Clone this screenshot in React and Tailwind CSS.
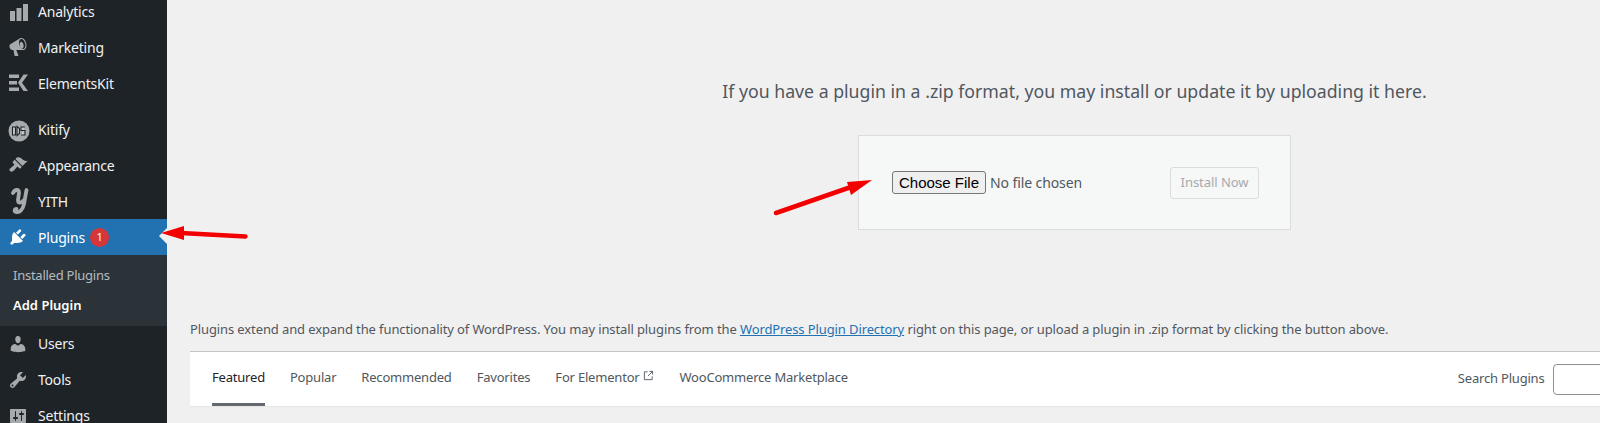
import React from 'react';

const ICONS = {
  marketing: 'M18.15 5.94c.46 1.62.38 3.22-.02 4.48-.42 1.28-1.26 2.18-2.3 2.48-.16.06-.26.06-.4.06-.06.02-.12.02-.18.02-.06.02-.14.02-.22.02h-6.8l2.22 5.5c.02.14-.06.26-.14.34-.08.1-.24.16-.34.16H6.95c-.1 0-.26-.06-.34-.16-.08-.08-.16-.2-.14-.34l-1-5.5H4.25l-.02-.02c-.5.06-1.08-.18-1.54-.62s-.88-1.08-1.06-1.88c-.24-.8-.2-1.56-.02-2.2.18-.62.58-1.08 1.06-1.3l.02-.02 9-5.4c.1-.06.18-.1.24-.16.06-.04.14-.08.24-.12.16-.08.28-.12.5-.18 1.04-.3 2.24.1 3.22 1 .98.88 1.8 2.24 2.26 3.86zm-2.58 5.98h-.02c.4-.1.74-.34 1.04-.7.58-.7.86-1.76.86-3.04 0-.64-.1-1.3-.28-1.98-.34-1.36-1.02-2.5-1.78-3.24s-1.68-1.1-2.46-.88c-.82.22-1.4.96-1.7 2-.32 1.04-.28 2.36.06 3.72.38 1.36 1 2.5 1.8 3.24.78.74 1.62 1.1 2.48.88zm-2.54-7.08c.22-.04.42-.02.62.04.38.16.76.48 1.1 1s.58 1.14.74 1.84c.32 1.44.1 2.7-.54 3.34-.16.14-.36.26-.58.32-.22.04-.42.02-.62-.04-.38-.16-.76-.48-1.1-1s-.58-1.14-.74-1.84c-.32-1.44-.1-2.7.54-3.34.16-.14.36-.26.58-.32z',
  appearance: 'M14.48 11.06L7.41 3.99l1.5-1.5c.5-.56 2.3-.47 3.51.32 1.21.8 1.43 1.28 2.91 2.1 1.18.64 2.45 1.26 4.45.85zm-.71.71L6.7 4.7 4.93 6.47c-.39.39-.39 1.02 0 1.41l1.06 1.06c.39.39.39 1.03 0 1.42-.6.6-1.43 1.11-2.21 1.69-.35.26-.7.53-1.01.84C1.43 13.23.91 15 2.01 16.1c1.1 1.1 2.87.57 4.21-.75.31-.31.58-.66.84-1.01.58-.78 1.09-1.61 1.69-2.21.39-.39 1.03-.39 1.42 0l1.06 1.06c.39.39 1.02.39 1.41 0z',
  plugins: 'M13.11 4.36L9.87 7.6 8 5.73l3.24-3.24c.35-.34 1.05-.2 1.56.32.52.51.66 1.21.31 1.55zm-8 1.77l.91-1.12 9.01 9.01-1.19.84c-.71.71-2.63 1.16-3.82 1.16H6.14L4.9 17.26c-.59.59-1.54.59-2.12 0-.59-.58-.59-1.53 0-2.12l1.24-1.24v-3.88c0-1.13.4-3.19 1.09-3.89zm7.26 3.97l3.24-3.24c.34-.35 1.04-.21 1.55.31.52.51.66 1.21.31 1.55l-3.24 3.25z',
  users: 'M10 9.25c-2.27 0-2.73-3.44-2.73-3.44C7 4.02 7.82 2 9.97 2c2.16 0 2.98 2.02 2.71 3.81 0 0-.41 3.44-2.68 3.44zm0 2.57L12.72 10c2.39 0 4.52 2.33 4.52 4.53v2.49s-3.65 1.13-7.24 1.13c-3.65 0-7.24-1.13-7.24-1.13v-2.49c0-2.25 1.94-4.48 4.47-4.48z',
  tools: 'M16.68 9.77c-1.34 1.34-3.3 1.67-4.95.99l-5.41 6.52c-.99.99-2.59.99-3.58 0s-.99-2.59 0-3.57l6.52-5.42c-.68-1.65-.35-3.61.99-4.95 1.28-1.28 3.12-1.62 4.72-1.06l-2.89 2.89 2.82 2.82 2.86-2.87c.53 1.58.18 3.39-1.08 4.65zM3.81 16.21c.4.39 1.04.39 1.43 0 .4-.4.4-1.04 0-1.43-.39-.4-1.03-.4-1.43 0-.39.39-.39 1.03 0 1.43z',
  settings: 'M18 16V4c0-.55-.45-1-1-1H3c-.55 0-1 .45-1 1v12c0 .55.45 1 1 1h14c.55 0 1-.45 1-1zM8 11h1c.55 0 1 .45 1 1s-.45 1-1 1H8v1.5c0 .28-.22.5-.5.5s-.5-.22-.5-.5V13H6c-.55 0-1-.45-1-1s.45-1 1-1h1V5.5c0-.28.22-.5.5-.5s.5.22.5.5V11zm5-2h-1c-.55 0-1-.45-1-1s.45-1 1-1h1V5.5c0-.28.22-.5.5-.5s.5.22.5.5V7h1c.55 0 1 .45 1 1s-.45 1-1 1h-1v5.5c0 .28-.22.5-.5.5s-.5-.22-.5-.5V9z',
};

const Icon = ({ d, className = 'text-[#a7aaad]' }) => (
  <svg viewBox="0 0 20 20" className={`w-5 h-5 ${className}`} fill="currentColor" fillRule="evenodd">
    <path d={d} />
  </svg>
);

const AnalyticsIcon = () => (
  <svg viewBox="0 0 20 20" className="w-5 h-5 text-[#a7aaad]" fill="currentColor">
    <rect x="2" y="10" width="5" height="10" />
    <rect x="8.500" y="7" width="5" height="13" />
    <rect x="15" y="3" width="5" height="17" />
  </svg>
);

const ElementsKitIcon = () => (
  <svg viewBox="0 0 20 20" className="w-5 h-5 text-[#a7aaad]" fill="currentColor">
    <rect x="1" y="1.500" width="10" height="3.500" />
    <rect x="1" y="8" width="8" height="3.500" />
    <rect x="1" y="14.500" width="10" height="3.500" />
    <path d="M15.500 1.500h4.500L14 9.700l6 8.300h-4.500L10 9.700z" />
  </svg>
);

const KitifyIcon = () => (
  <svg viewBox="0 0 22 22" className="w-[22px] h-[22px] mt-1">
    <circle cx="11" cy="11" r="10.500" fill="#a7aaad" />
    <path d="M4.500 7h3v8h-3zM9 6.500l2.500 2v5L9 15.500zM17 7h-4v3.500h4v4.500h-4" fill="#c4c6c8" stroke="#1d2327" strokeWidth="1.100" />
  </svg>
);

const YithIcon = () => (
  <svg viewBox="0 0 18 30" className="w-[18px] h-[30px] ml-[3px]" fill="none" stroke="#a7aaad" strokeWidth="3.800" strokeLinecap="round" strokeLinejoin="round">
    <path d="M2 7C4 3 8 3 8 7L7 14c0 3.500 3 3.500 6 0" />
    <path d="M15.500 4L13 18c-1 5-4 9-8 8-2-.6-1.500-3 .5-3" />
  </svg>
);

const menuTop = [
  { label: 'Analytics', icon: <AnalyticsIcon /> },
  { label: 'Marketing', icon: <Icon d={ICONS.marketing} /> },
  { label: 'ElementsKit', icon: <ElementsKitIcon /> },
];

const menuMiddle = [
  { label: 'Kitify', icon: <KitifyIcon /> },
  { label: 'Appearance', icon: <Icon d={ICONS.appearance} /> },
  { label: 'YITH', icon: <YithIcon /> },
];

const menuBottom = [
  { label: 'Users', icon: <Icon d={ICONS.users} /> },
  { label: 'Tools', icon: <Icon d={ICONS.tools} /> },
  { label: 'Settings', icon: <Icon d={ICONS.settings} /> },
];

const MenuItem = ({ label, icon, className = '' }) => (
  <div className={`h-9 flex items-center text-[#f0f0f1] ${className}`}>
    <div className="w-[38px] pl-[8px] flex items-center shrink-0">{icon}</div>
    <span>{label}</span>
  </div>
);

const tabs = ['Popular', 'Recommended', 'Favorites'];

const App = () => {
  return (
    <div className="relative w-[1600px] h-[423px] overflow-hidden flex bg-[#f0f0f1] text-[13px] text-[#50575e] font-['Noto_Sans',sans-serif]">
      {/* Admin sidebar */}
      <aside className="w-[167px] shrink-0 bg-[#1d2327] text-[14px] tracking-[-0.2px] -mt-[7px] relative">
        {menuTop.map((item) => <MenuItem key={item.label} {...item} />)}
        <div className="h-[10px]" />
        {menuMiddle.map((item) => <MenuItem key={item.label} {...item} />)}

        <div className="h-9 flex items-center bg-[#2271b1] text-white relative">
          <div className="w-[38px] pl-[8px] flex items-center shrink-0">
            <Icon d={ICONS.plugins} className="text-white" />
          </div>
          <span>Plugins</span>
          <span className="ml-[5px] w-[19px] h-[19px] rounded-full bg-[#d63638] text-[11px] flex items-center justify-center">1</span>
          <div className="absolute right-0 top-[9px] w-0 h-0 border-y-[8px] border-y-transparent border-r-[8px] border-r-[#f0f0f1]" />
        </div>

        <div className="h-[71px] bg-[#2c3338] pt-[6px] text-[13px]">
          <div className="h-[30px] flex items-center pl-[13px] tracking-[-0.25px] text-[#f0f6fc]/70">Installed Plugins</div>
          <div className="h-[30px] flex items-center pl-[13px] tracking-normal text-white font-semibold">Add Plugin</div>
        </div>

        {menuBottom.map((item) => <MenuItem key={item.label} {...item} className="pb-px" />)}
      </aside>

      {/* Main content */}
      <main className="w-[1769px] shrink-0 ml-[23px] pt-[79px]">
        <p className="text-center text-[17.7px] leading-6">
          If you have a plugin in a .zip format, you may install or update it by uploading it here.
        </p>

        <div className="mt-[32px] mx-auto w-[433px] h-[95px] border border-[#dcdcde] bg-[#f6f7f7] flex items-center pl-[33px] pr-[31px]">
          <button className="w-[94px] h-[23px] bg-[#efefef] border border-[#767676] rounded-[3px] text-black text-[15px] leading-none font-['Liberation_Sans',sans-serif]">
            Choose File
          </button>
          <span className="ml-[4px] text-[14px] tracking-[-0.1px]">No file chosen</span>
          <button className="ml-auto w-[89px] h-8 border border-[#dcdcde] rounded-[3px] bg-[#f6f7f7] text-[#a7aaad] text-[13px] tracking-[-0.05px]">
            Install Now
          </button>
        </div>

        <p className="mt-[89px] leading-5 tracking-[-0.11px]">
          Plugins extend and expand the functionality of WordPress. You may install plugins from the{' '}
          <span className="text-[#2271b1] underline">WordPress Plugin Directory</span>{' '}
          right on this page, or upload a plugin in .zip format by clicking the button above.
        </p>

        <div className="mt-[12px] h-[55px] bg-white border-t border-[#c3c4c7] shadow-[0_1px_1px_rgba(0,0,0,0.04)] flex pl-[22px] tracking-[-0.2px]">
          <div className="h-full flex items-center border-b-[3px] border-[#646970] text-[#1d2327]">Featured</div>
          {tabs.map((tab) => (
            <div key={tab} className="ml-[25px] h-full flex items-center pb-[3px]">{tab}</div>
          ))}
          <div className="ml-[25px] h-full flex items-center pb-[3px]">
            For Elementor
            <svg viewBox="0 0 12 12" className="ml-[4px] -mt-[4px] w-[11px] h-[11px]" fill="none" stroke="currentColor">
              <path d="M5 2H1.500v8.500H10V7M7 1.500h3.500V5M10.500 1.500L5.500 6.500" />
            </svg>
          </div>
          <div className="ml-[25px] h-full flex items-center pb-[3px]">WooCommerce Marketplace</div>

          <div className="ml-[610px] h-full flex items-center">
            <span>Search Plugins</span>
            <div className="ml-[9px] w-[190px] h-[31px] bg-white border border-[#8c8f94] rounded-[4px]" />
          </div>
        </div>
      </main>

      {/* Annotation arrows */}
      <svg className="absolute left-[155px] top-[220px] w-[100px] h-[30px]" viewBox="0 0 100 30" fill="#f30000">
        <path d="M6 13L29 6v14z" />
        <path d="M26 13L90.500 16.500" fill="none" stroke="#f30000" strokeWidth="4.500" strokeLinecap="round" />
      </svg>
      <svg className="absolute left-[765px] top-[170px] w-[115px] h-[55px]" viewBox="0 0 115 55" fill="#f30000">
        <path d="M107 10L82 12l4 13z" />
        <path d="M11 43L86 17" fill="none" stroke="#f30000" strokeWidth="4.500" strokeLinecap="round" />
      </svg>
    </div>
  );
};

export default App;
